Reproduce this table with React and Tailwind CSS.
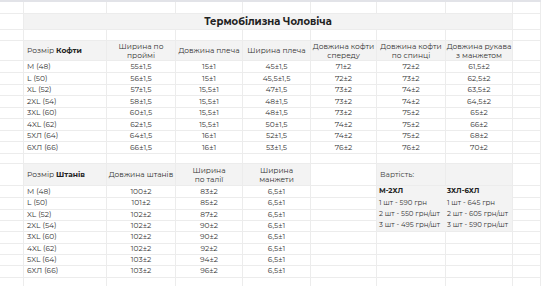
import React from "react";

const cols = "grid grid-cols-[24px_83px_69px_67px_68px_66px_69px_67px_28px]";

const shirts = [
  ["M (48)", "55±1,5", "15±1", "45±1,5", "71±2", "72±2", "61,5±2"],
  ["L (50)", "56±1,5", "15±1", "45,5±1,5", "72±2", "73±2", "62,5±2"],
  ["XL (52)", "57±1,5", "15,5±1", "47±1,5", "73±2", "74±2", "63,5±2"],
  ["2XL (54)", "58±1,5", "15,5±1", "48±1,5", "73±2", "74±2", "64,5±2"],
  ["3XL (60)", "60±1,5", "15,5±1", "48±1,5", "73±2", "75±2", "65±2"],
  ["4XL (62)", "62±1,5", "15,5±1", "50±1,5", "74±2", "75±2", "66±2"],
  ["5ХЛ (64)", "64±1,5", "16±1", "52±1,5", "74±2", "75±2", "68±2"],
  ["6ХЛ (66)", "66±1,5", "16±1", "53±1,5", "76±2", "76±2", "70±2"],
];

const pants = [
  ["M (48)", "100±2", "83±2", "6,5±1"],
  ["L (50)", "101±2", "85±2", "6,5±1"],
  ["XL (52)", "102±2", "87±2", "6,5±1"],
  ["2XL (54)", "102±2", "90±2", "6,5±1"],
  ["3XL (60)", "102±2", "90±2", "6,5±1"],
  ["4XL (62)", "102±2", "92±2", "6,5±1"],
  ["5XL (64)", "103±2", "94±2", "6,5±1"],
  ["6ХЛ (66)", "103±2", "96±2", "6,5±1"],
];

const prices = [
  ["М-2ХЛ", "3ХЛ-6ХЛ", true],
  ["1 шт - 590 грн", "1 шт - 645 грн"],
  ["2 шт - 550 грн/шт", "2 шт - 605 грн/шт"],
  ["3 шт - 495 грн/шт", "3 шт - 590 грн/шт"],
];

// plain spreadsheet cell
const Cell = ({ children, className = "" }) => (
  <div
    className={`border-r border-b border-[#ececec] flex items-center whitespace-nowrap overflow-visible ${className}`}
  >
    {children}
  </div>
);

const T = "border-[#dedede] text-[#333]";

const EmptyRow = ({ h }) => (
  <div className={`${cols} ${h}`}>
    {Array.from({ length: 9 }).map((_, i) => (
      <Cell key={i} />
    ))}
  </div>
);

export default function App() {
  return (
    <div className="w-[541px] h-[286px] overflow-hidden bg-white text-[7.5px] text-[#333] font-['Montserrat','DejaVu_Sans',sans-serif]">
      <div className="h-[2px] bg-[#e2e3e8]" />
      <EmptyRow h="h-[12px]" />

      {/* title */}
      <div className={`${cols} h-[15px]`}>
        <Cell />
        <Cell className="col-span-7 justify-center bg-[#f3f3f3] border-[#dedede] text-[10px] font-bold text-[#222]">
          Термобілизна Чоловіча
        </Cell>
        <Cell />
      </div>
      <EmptyRow h="h-[12px]" />

      {/* shirts header */}
      <div className={`${cols} h-[20px] leading-[9px]`}>
        <Cell />
        <Cell className={`${T} bg-[#f3f3f3] pl-[3px]`}>
          Розмір&nbsp;<b className="text-[#222]">Кофти</b>
        </Cell>
        {["Ширина по\nпроймі", "Довжина плеча", "Ширина плеча", "Довжина кофти\nспереду", "Довжина кофти\nпо спинці", "Довжина рукава\nз манжетом"].map((h) => (
          <Cell key={h} className={`${T} bg-[#f3f3f3] justify-center text-center whitespace-pre`}>
            {h}
          </Cell>
        ))}
        <Cell />
      </div>
      {shirts.map((r) => (
        <div key={r[0]} className={`${cols} h-[11.5px]`}>
          <Cell />
          <Cell className={`${T} pl-[3px]`}>{r[0]}</Cell>
          {r.slice(1).map((v, i) => (
            <Cell key={i} className={`${T} justify-center`}>
              {v}
            </Cell>
          ))}
          <Cell />
        </div>
      ))}
      <EmptyRow h="h-[11px]" />

      {/* pants header + price block */}
      <div className={`${cols} h-[22px] leading-[9px]`}>
        <Cell />
        <Cell className={`${T} bg-[#f3f3f3] pl-[3px]`}>
          Розмір&nbsp;<b className="text-[#222]">Штанів</b>
        </Cell>
        {["Довжина штанів", "Ширина\nпо талії", "Ширина\nманжети"].map((h) => (
          <Cell key={h} className={`${T} bg-[#f3f3f3] justify-center text-center whitespace-pre`}>
            {h}
          </Cell>
        ))}
        <Cell />
        <Cell className="bg-[#f3f3f3] border-[#e6e6e6] pl-[3px] text-[#444]">Вартість:</Cell>
        <Cell className="bg-[#f3f3f3] border-[#e6e6e6]" />
        <Cell />
      </div>
      {pants.map((r, idx) => {
        const p = prices[idx];
        return (
          <div key={r[0]} className={`${cols} h-[11.35px]`}>
            <Cell />
            <Cell className={`${T} pl-[3px]`}>{r[0]}</Cell>
            {r.slice(1).map((v, i) => (
              <Cell key={i} className={`${T} justify-center`}>
                {v}
              </Cell>
            ))}
            <Cell />
            {p ? (
              <>
                <Cell className={`bg-[#f3f3f3] border-[#ececec] border-r-transparent pl-[2px] text-[7px] ${p[2] ? "font-bold text-[#222] text-[7.5px]" : ""}`}>
                  {p[0]}
                </Cell>
                <Cell className={`bg-[#f3f3f3] border-[#ececec] pl-[1px] text-[7px] ${p[2] ? "font-bold text-[#222] text-[7.5px]" : ""}`}>
                  {p[1]}
                </Cell>
              </>
            ) : (
              <>
                <Cell />
                <Cell />
              </>
            )}
            <Cell />
          </div>
        );
      })}
      <EmptyRow h="h-[12px]" />
    </div>
  );
}
